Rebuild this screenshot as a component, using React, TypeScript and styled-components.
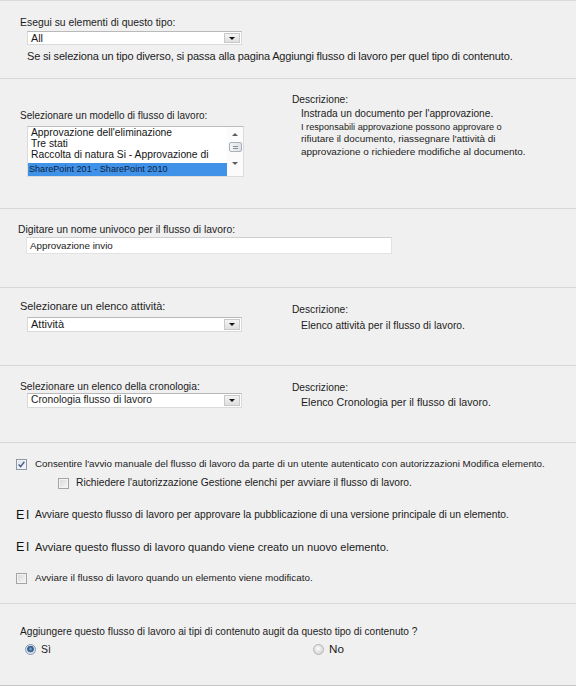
import React from "react";
import styled, { createGlobalStyle } from "styled-components";

const GlobalStyle = createGlobalStyle`
  html, body {
    margin: 0;
    padding: 0;
    background: #f0f0f0;
  }
  body {
    font-family: "Liberation Sans", Arial, sans-serif;
    color: #1c1c1c;
  }
`;

const Page = styled.div`
  width: 576px;
  height: 686px;
  box-sizing: border-box;
  border-top: 1px solid #dadada;
  background: #f0f0f0;
  overflow: hidden;
`;

const Section = styled.section<{ $h: number; $last?: boolean }>`
  box-sizing: border-box;
  height: ${({ $h }) => $h}px;
  display: flex;
  align-items: flex-start;
  border-bottom: 1px solid ${({ $last }) => ($last ? "#c6c6c6" : "#d8d8d8")};
`;

const LeftCol = styled.div<{ $pt: number; $w?: number }>`
  box-sizing: border-box;
  width: ${({ $w }) => ($w ? `${$w}px` : "272px")};
  padding-top: ${({ $pt }) => $pt}px;
  margin-left: 20px;
  display: flex;
  flex-direction: column;
`;

const RightCol = styled.div<{ $pt: number }>`
  padding-top: ${({ $pt }) => $pt}px;
  display: flex;
  flex-direction: column;
`;

const Label = styled.div<{ $size: number; $lh?: number; $shift?: number }>`
  font-size: ${({ $size }) => $size}px;
  line-height: ${({ $lh }) => $lh ?? 12}px;
  margin-left: ${({ $shift }) => $shift ?? 0}px;
  white-space: nowrap;
`;

const Hint = styled.div<{ $size: number; $mt: number }>`
  font-size: ${({ $size }) => $size}px;
  line-height: 13px;
  letter-spacing: -0.16px;
  margin: ${({ $mt }) => $mt}px 0 0 7px;
  white-space: nowrap;
`;

const DescTitle = styled.div`
  font-size: 10.2px;
  line-height: 12px;
  white-space: nowrap;
`;

const DescLine = styled.div<{ $size: number; $lh?: number; $mt?: number }>`
  font-size: ${({ $size }) => $size}px;
  line-height: ${({ $lh }) => $lh ?? 12.5}px;
  margin: ${({ $mt }) => $mt ?? 0}px 0 0 9px;
  white-space: nowrap;
`;

/* drop-down select */
const SelectBox = styled.div<{ $h: number; $mt: number }>`
  box-sizing: border-box;
  width: 215px;
  height: ${({ $h }) => $h}px;
  margin: ${({ $mt }) => $mt}px 0 0 7px;
  background: #fff;
  border: 1px solid #dadada;
  border-top-color: #b9b9b9;
  display: flex;
  align-items: center;
  justify-content: space-between;
`;

const SelectValue = styled.span<{ $size: number }>`
  font-size: ${({ $size }) => $size}px;
  line-height: 1;
  padding-left: 3px;
  white-space: nowrap;
  color: #1a1a1a;
`;

const DropButton = styled.span`
  box-sizing: border-box;
  width: 16px;
  height: calc(100% - 2px);
  margin-right: 1px;
  border: 1px solid #c9c9c9;
  background: linear-gradient(#f4f4f4, #dedede);
  display: flex;
  align-items: center;
  justify-content: center;

  &::after {
    content: "";
    border-left: 3px solid transparent;
    border-right: 3px solid transparent;
    border-top: 3px solid #141414;
  }
`;

/* list box */
const ListBox = styled.div`
  box-sizing: border-box;
  width: 217px;
  height: 51px;
  margin: 4px 0 0 7px;
  background: #fff;
  border: 1px solid #dcdcdc;
  border-top-color: #bdbdbd;
  display: flex;
  overflow: hidden;
`;

const ListItems = styled.div`
  flex: 1;
  display: flex;
  flex-direction: column;
`;

const ListItem = styled.div<{ $selected?: boolean }>`
  font-size: ${({ $selected }) => ($selected ? "9.1px" : "10.3px")};
  line-height: ${({ $selected }) => ($selected ? "13px" : "11px")};
  height: ${({ $selected }) => ($selected ? "13px" : "11px")};
  margin-top: ${({ $selected }) => ($selected ? "3px" : "0")};
  padding-left: ${({ $selected }) => ($selected ? "1px" : "3px")};
  background: ${({ $selected }) => ($selected ? "#3f92e8" : "transparent")};
  color: ${({ $selected }) => ($selected ? "#10223d" : "#141414")};
  white-space: nowrap;
`;

const ScrollBar = styled.div`
  width: 16px;
  display: flex;
  flex-direction: column;
  align-items: center;
  background: #fbfbfb;
`;

const ScrollArrow = styled.span<{ $up?: boolean; $mt: number }>`
  margin-top: ${({ $mt }) => $mt}px;
  width: 0;
  height: 0;
  border-left: 3px solid transparent;
  border-right: 3px solid transparent;
  ${({ $up }) =>
    $up ? "border-bottom: 3px solid #5c5c5c;" : "border-top: 3px solid #5c5c5c;"}
`;

const ScrollThumb = styled.span`
  box-sizing: border-box;
  margin-top: 6px;
  width: 13px;
  height: 10px;
  border: 1px solid #a9b0ba;
  border-radius: 2px;
  background: linear-gradient(90deg, #f3f3f3, #dfe3e8);
  display: flex;
  flex-direction: column;
  justify-content: center;
  align-items: center;
  gap: 1px;

  &::before,
  &::after {
    content: "";
    width: 5px;
    height: 1px;
    background: #8a8f96;
  }
`;

/* text input */
const TextInput = styled.div`
  box-sizing: border-box;
  width: 366px;
  height: 17px;
  margin: 1px 0 0 6px;
  background: #fff;
  border: 1px solid #e2e2e2;
  border-top-color: #cfcfcf;
  font-size: 9.8px;
  line-height: 15px;
  padding-left: 3px;
  color: #1a1a1a;
`;

/* options area */
const OptionsCol = styled.div`
  box-sizing: border-box;
  padding: 14px 0 0 16px;
  display: flex;
  flex-direction: column;
`;

const OptionRow = styled.div<{ $mt: number; $indent?: number }>`
  height: 14px;
  margin: ${({ $mt }) => $mt}px 0 0 ${({ $indent }) => $indent ?? 0}px;
  display: flex;
  align-items: center;
`;

const OptionText = styled.span<{ $size: number; $gap: number }>`
  font-size: ${({ $size }) => $size}px;
  line-height: 14px;
  margin-left: ${({ $gap }) => $gap}px;
  white-space: nowrap;
  color: #1a1a1a;
`;

const CheckBox = styled.span<{ $checked?: boolean }>`
  box-sizing: border-box;
  flex: none;
  width: 11px;
  height: 11px;
  border: 1px solid ${({ $checked }) => ($checked ? "#8d97a6" : "#a4a4a4")};
  background: ${({ $checked }) =>
    $checked
      ? "linear-gradient(135deg, #d9e2ee, #f7f9fc)"
      : "linear-gradient(135deg, #d6d6d6, #f8f8f8)"};
  box-shadow: inset 0 0 0 1px #f3f3f3;
  display: flex;
  align-items: center;
  justify-content: center;
`;

const TriggerMark = styled.span`
  flex: none;
  width: 19px;
  font-size: 12.5px;
  line-height: 14px;
  letter-spacing: 2px;
  color: #111;
`;

/* radio group */
const QuestionCol = styled.div`
  padding: 22px 0 0 20px;
  display: flex;
  flex-direction: column;
`;

const RadioRow = styled.div`
  margin: 4px 0 0 5px;
  height: 14px;
  display: flex;
  align-items: center;
`;

const RadioOption = styled.label<{ $w?: number }>`
  width: ${({ $w }) => ($w ? `${$w}px` : "auto")};
  display: flex;
  align-items: center;
`;

const RadioDot = styled.span<{ $checked?: boolean }>`
  box-sizing: border-box;
  flex: none;
  width: 11px;
  height: 11px;
  border-radius: 50%;
  border: 1px solid ${({ $checked }) => ($checked ? "#8a98ab" : "#b5b5b5")};
  background: ${({ $checked }) =>
    $checked
      ? "radial-gradient(circle at 50% 45%, #8fb6dc 0, #2f5a86 2.2px, #4d7aa8 3.2px, #d3dde8 3.6px, #eef2f6 100%)"
      : "radial-gradient(circle at 45% 40%, #ffffff 0, #e6e6e6 3px, #cdcdcd 100%)"};
`;

const RadioText = styled.span<{ $size: number }>`
  font-size: ${({ $size }) => $size}px;
  line-height: 14px;
  margin-left: 5px;
  color: #1a1a1a;
`;

const CheckMark = () => (
  <svg width="9" height="9" viewBox="0 0 9 9">
    <path
      d="M1.6 4.6 L3.6 6.6 L7.4 1.8"
      fill="none"
      stroke="#4a5d8c"
      strokeWidth="1.4"
    />
  </svg>
);

const Select = ({ value, size, h, mt }: { value: string; size: number; h: number; mt: number }) => (
  <SelectBox $h={h} $mt={mt}>
    <SelectValue $size={size}>{value}</SelectValue>
    <DropButton />
  </SelectBox>
);

export default function App() {
  return (
    <>
      <GlobalStyle />
      <Page>
        <Section $h={78}>
          <LeftCol $pt={16} $w={540}>
            <Label $size={10.4}>Esegui su elementi di questo tipo:</Label>
            <Select value="All" size={10.8} h={14} mt={2} />
            <Hint $size={11} $mt={5}>
              Se si seleziona un tipo diverso, si passa alla pagina Aggiungi flusso di lavoro per quel tipo di contenuto.
            </Hint>
          </LeftCol>
        </Section>

        <Section $h={130}>
          <LeftCol $pt={31}>
            <Label $size={10}>Selezionare un modello di flusso di lavoro:</Label>
            <ListBox>
              <ListItems>
                <ListItem>Approvazione dell'eliminazione</ListItem>
                <ListItem>Tre stati</ListItem>
                <ListItem>Raccolta di natura Si - Approvazione di</ListItem>
                <ListItem $selected>SharePoint 201 - SharePoint 2010</ListItem>
              </ListItems>
              <ScrollBar>
                <ScrollArrow $up $mt={6} />
                <ScrollThumb />
                <ScrollArrow $mt={10} />
              </ScrollBar>
            </ListBox>
          </LeftCol>
          <RightCol $pt={15}>
            <DescTitle>Descrizione:</DescTitle>
            <DescLine $size={10.16} $mt={2}>Instrada un documento per l'approvazione.</DescLine>
            <DescLine $size={9.2}>I responsabili approvazione possono approvare o</DescLine>
            <DescLine $size={9.9}>rifiutare il documento, riassegnare l'attività di</DescLine>
            <DescLine $size={9.93}>approvazione o richiedere modifiche al documento.</DescLine>
          </RightCol>
        </Section>

        <Section $h={79}>
          <LeftCol $pt={15} $w={540}>
            <Label $size={10.33} $shift={-2}>Digitare un nome univoco per il flusso di lavoro:</Label>
            <TextInput>Approvazione invio</TextInput>
          </LeftCol>
        </Section>

        <Section $h={78}>
          <LeftCol $pt={12}>
            <Label $size={10.9} $lh={13}>Selezionare un elenco attività:</Label>
            <Select value="Attività" size={11} h={15} mt={4} />
          </LeftCol>
          <RightCol $pt={16}>
            <DescTitle>Descrizione:</DescTitle>
            <DescLine $size={10.32} $lh={13} $mt={3}>Elenco attività per il flusso di lavoro.</DescLine>
          </RightCol>
        </Section>

        <Section $h={77}>
          <LeftCol $pt={15}>
            <Label $size={10.31}>Selezionare un elenco della cronologia:</Label>
            <Select value="Cronologia flusso di lavoro" size={10.27} h={15} mt={0} />
          </LeftCol>
          <RightCol $pt={16}>
            <DescTitle>Descrizione:</DescTitle>
            <DescLine $size={10.65} $lh={13} $mt={2}>Elenco Cronologia per il flusso di lavoro.</DescLine>
          </RightCol>
        </Section>

        <Section $h={161}>
          <OptionsCol>
            <OptionRow $mt={0}>
              <CheckBox $checked>
                <CheckMark />
              </CheckBox>
              <OptionText $size={9.79} $gap={8}>
                Consentire l'avvio manuale del flusso di lavoro da parte di un utente autenticato con autorizzazioni Modifica elemento.
              </OptionText>
            </OptionRow>
            <OptionRow $mt={5} $indent={42}>
              <CheckBox />
              <OptionText $size={10.24} $gap={7}>
                Richiedere l'autorizzazione Gestione elenchi per avviare il flusso di lavoro.
              </OptionText>
            </OptionRow>
            <OptionRow $mt={18}>
              <TriggerMark>El</TriggerMark>
              <OptionText $size={10.25} $gap={0}>
                Avviare questo flusso di lavoro per approvare la pubblicazione di una versione principale di un elemento.
              </OptionText>
            </OptionRow>
            <OptionRow $mt={18}>
              <TriggerMark>El</TriggerMark>
              <OptionText $size={11.08} $gap={0}>
                Avviare questo flusso di lavoro quando viene creato un nuovo elemento.
              </OptionText>
            </OptionRow>
            <OptionRow $mt={17}>
              <CheckBox />
              <OptionText $size={9.87} $gap={8}>
                Avviare il flusso di lavoro quando un elemento viene modificato.
              </OptionText>
            </OptionRow>
          </OptionsCol>
        </Section>

        <Section $h={82} $last>
          <QuestionCol>
            <Label $size={10.14}>
              Aggiungere questo flusso di lavoro ai tipi di contenuto augit da questo tipo di contenuto ?
            </Label>
            <RadioRow>
              <RadioOption $w={288}>
                <RadioDot $checked />
                <RadioText $size={10.5}>Sì</RadioText>
              </RadioOption>
              <RadioOption>
                <RadioDot />
                <RadioText $size={11.7}>No</RadioText>
              </RadioOption>
            </RadioRow>
          </QuestionCol>
        </Section>
      </Page>
    </>
  );
}
